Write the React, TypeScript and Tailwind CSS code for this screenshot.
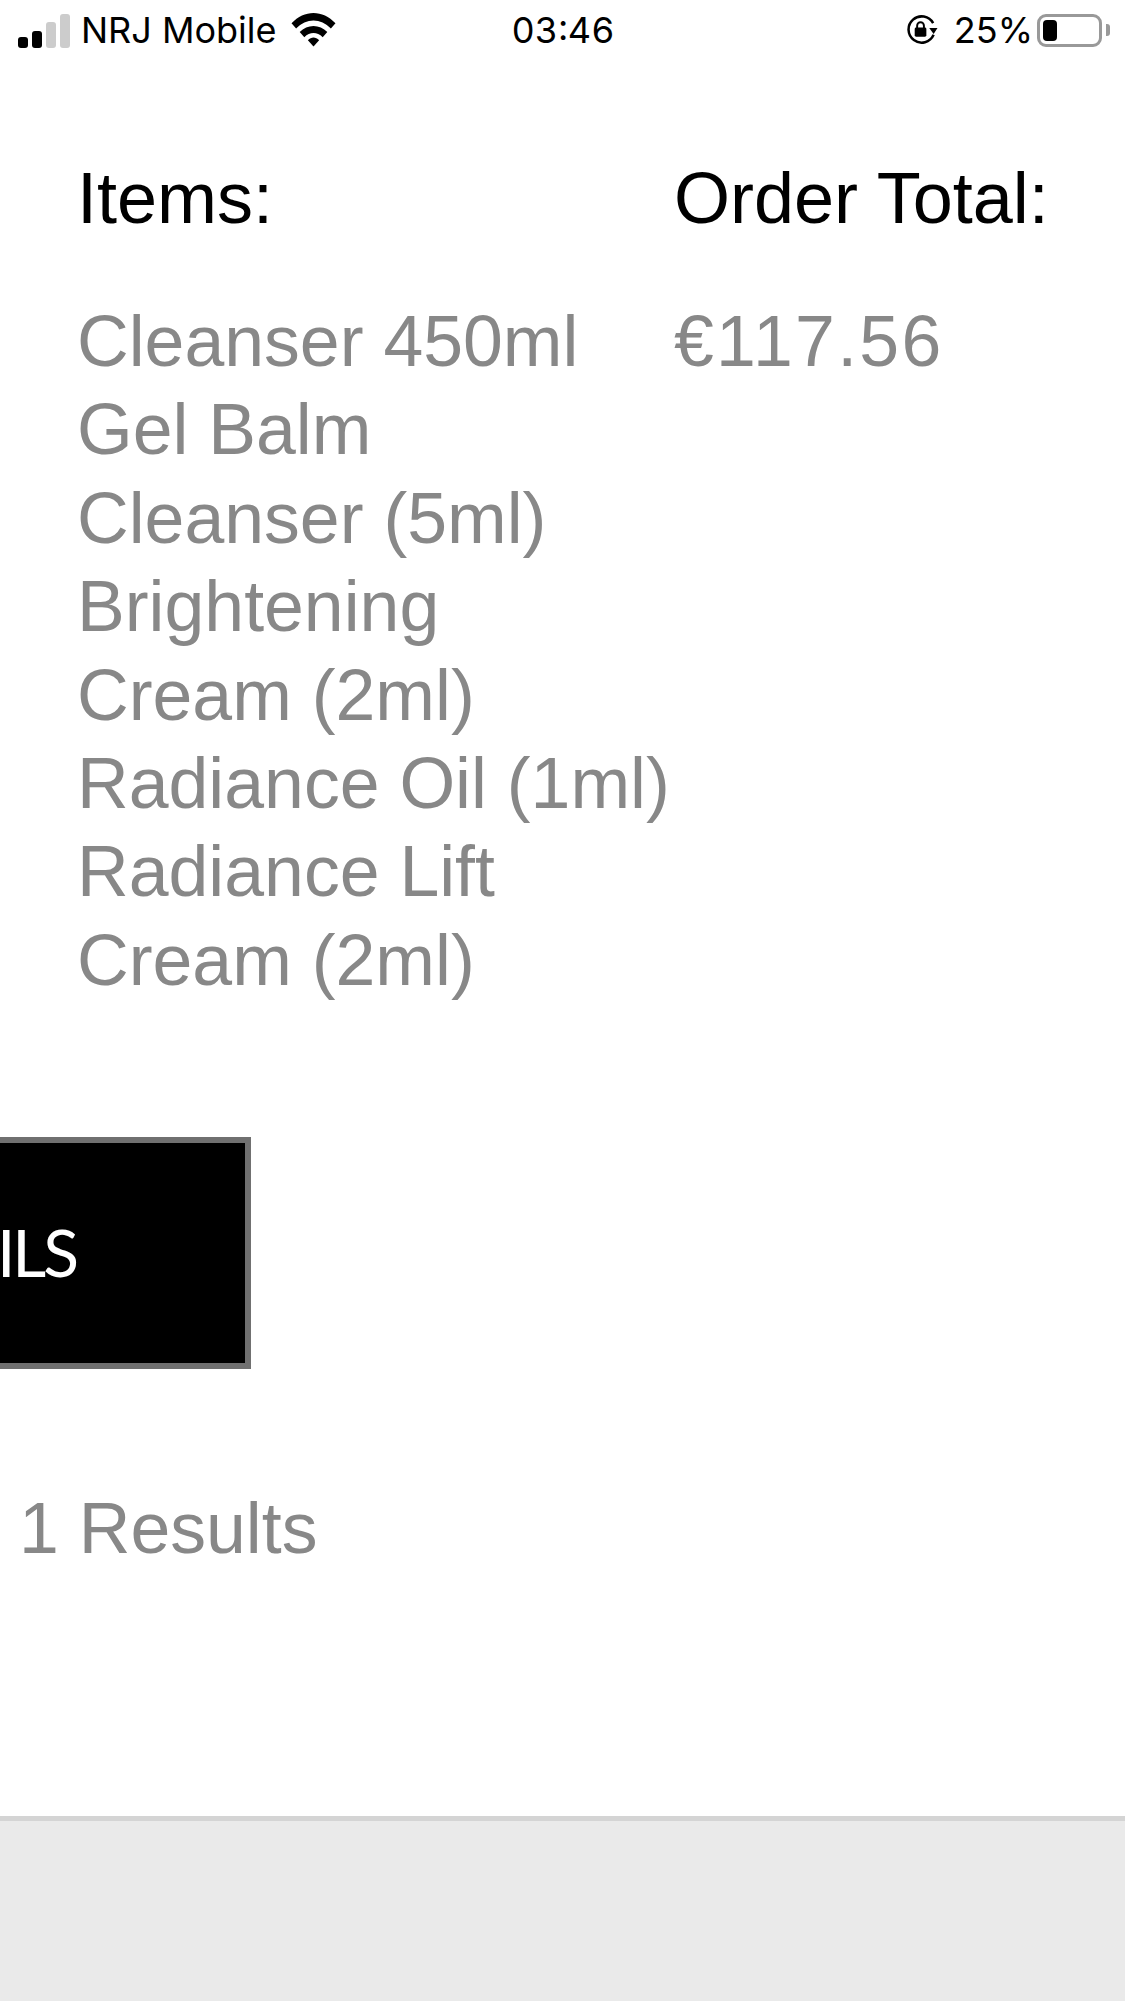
const items = [
  'Cleanser 450ml',
  'Gel Balm',
  'Cleanser (5ml)',
  'Brightening',
  'Cream (2ml)',
  'Radiance Oil (1ml)',
  'Radiance Lift',
  'Cream (2ml)',
]

function StatusBar() {
  return (
    <div className="h-[60px] grid grid-cols-[1fr_auto_1fr] items-center pl-[18px] pr-[15px] font-['Inter',sans-serif] text-[36px] leading-none text-black">
      <div className="flex items-center">
        <div className="flex items-end gap-[4px] w-[63px] h-[34px] mt-[1px]">
          <span className="w-[10px] h-[11px] rounded-[3px] bg-black" />
          <span className="w-[10px] h-[17px] rounded-[3px] bg-black" />
          <span className="w-[10px] h-[26px] rounded-[3px] bg-[#cccccc]" />
          <span className="w-[10px] h-[34px] rounded-[3px] bg-[#cccccc]" />
        </div>
        <span>NRJ Mobile</span>
        <svg className="ml-[14px] mb-[2px]" width="45" height="35" viewBox="0 0 44 34">
          <path d="M0.5 11 C13 -2.5 31 -2.5 43.5 11 L39 16 C29 5.5 15 5.5 5 16 Z" fill="#000" />
          <path d="M8.5 19.5 C16 11.5 28 11.5 35.5 19.5 L31 24.5 C25.5 19 18.5 19 13 24.5 Z" fill="#000" />
          <path d="M16.5 27.5 C20 24 24 24 27.5 27.5 L22 33.5 Z" fill="#000" />
        </svg>
      </div>
      <span className="tabular-nums -ml-[2px]">03:46</span>
      <div className="flex items-center justify-end">
        <svg className="mr-[16px]" width="33" height="30" viewBox="0 0 34 30" fill="none">
          <path d="M29 8 A13.5 13.5 0 1 0 29.5 20" stroke="#000" strokeWidth="2.6" />
          <path d="M25 13 L33.5 13 L29.5 19 Z" fill="#000" />
          <rect x="10" y="12.5" width="12" height="9.5" rx="1.5" fill="#000" />
          <path d="M12.5 13 V10.5 A3.5 3.5 0 0 1 19.5 10.5 V13" stroke="#000" strokeWidth="2" />
        </svg>
        <span>25%</span>
        <div className="ml-[4px] w-[65px] h-[33px] rounded-[9px] border-[3px] border-[#999999] p-[3px] flex">
          <span className="w-[14px] rounded-[4px] bg-black" />
        </div>
        <span className="ml-[4px] w-[4px] h-[12px] bg-[#999999] rounded-r-[3px]" />
      </div>
    </div>
  )
}

export default function App() {
  return (
    <div className="h-[2001px] overflow-hidden flex flex-col bg-white font-['Liberation_Sans',Arial,sans-serif]">
      <StatusBar />

      <main className="flex-1">
        {/* Order summary */}
        <div className="flex pl-[77px] pt-[94px]">
          <div className="w-[597px]">
            <h2 className="text-[72px] leading-[88px] text-black">Items:</h2>
            <ul className="mt-[55px] w-[500px] text-[71.6px] leading-[88.4px] text-[#888888]">
              {items.map((item, i) => (
                <li key={i} className="whitespace-nowrap">{item}</li>
              ))}
            </ul>
          </div>
          <div>
            <h2 className="text-[72px] leading-[88px] text-black whitespace-nowrap">Order Total:</h2>
            <p className="mt-[55px] text-[71.6px] leading-[88.4px] tracking-[2.3px] text-[#888888]">€117.56</p>
          </div>
        </div>

        <button className="block mt-[133px] -ml-[399px] w-[650px] h-[232px] pr-[105px] pb-[4px] bg-black border-[6px] border-[#707070] text-white text-[66px] tracking-[-3px] font-['Lato',sans-serif] whitespace-nowrap">
          VIEW DETAILS
        </button>

        <p className="mt-[115px] pl-[19px] text-[71.6px] leading-[88px] text-[#888888]">1 Results</p>
      </main>

      {/* Footer */}
      <footer className="h-[185px] bg-[#eaeaea] border-t-[5px] border-[#d4d4d4]" />
    </div>
  )
}
